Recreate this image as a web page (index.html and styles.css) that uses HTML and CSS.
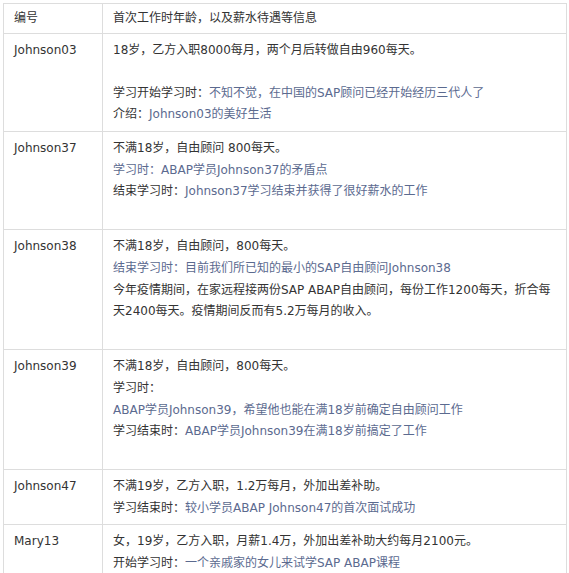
FILE: index.html
```html
<!DOCTYPE html>
<html lang="zh-CN">
<head>
    <meta charset="UTF-8">
    <meta name="viewport" content="width=device-width, initial-scale=1.0">
    <title>学员信息</title>
    <link rel="stylesheet" href="styles.css">
</head>
<body>
    <table class="info-table">
        <colgroup>
            <col class="col-id">
            <col class="col-info">
        </colgroup>
        <thead>
            <tr>
                <th>编号</th>
                <th>首次工作时年龄，以及薪水待遇等信息</th>
            </tr>
        </thead>
        <tbody>
            <tr>
                <td>Johnson03</td>
                <td>
                    <p>18岁，乙方入职8000每月，两个月后转做自由960每天。</p>
                    <p><br></p>
                    <p>学习开始学习时：<span class="note">不知不觉，在中国的SAP顾问已经开始经历三代人了</span></p>
                    <p>介绍：<span class="note">Johnson03的美好生活</span></p>
                </td>
            </tr>
            <tr>
                <td>Johnson37</td>
                <td>
                    <p>不满18岁，自由顾问 800每天。</p>
                    <p class="note">学习时：ABAP学员Johnson37的矛盾点</p>
                    <p>结束学习时：<span class="note">Johnson37学习结束并获得了很好薪水的工作</span></p>
                    <p><br></p>
                </td>
            </tr>
            <tr>
                <td>Johnson38</td>
                <td>
                    <p>不满18岁，自由顾问，800每天。</p>
                    <p class="note">结束学习时：目前我们所已知的最小的SAP自由顾问Johnson38</p>
                    <p>今年疫情期间，在家远程接两份SAP ABAP自由顾问，每份工作1200每天，折合每天2400每天。疫情期间反而有5.2万每月的收入。</p>
                    <p><br></p>
                </td>
            </tr>
            <tr>
                <td>Johnson39</td>
                <td>
                    <p>不满18岁，自由顾问，800每天。</p>
                    <p>学习时：</p>
                    <p class="note">ABAP学员Johnson39，希望他也能在满18岁前确定自由顾问工作</p>
                    <p>学习结束时：<span class="note">ABAP学员Johnson39在满18岁前搞定了工作</span></p>
                    <p><br></p>
                </td>
            </tr>
            <tr>
                <td>Johnson47</td>
                <td>
                    <p>不满19岁，乙方入职，1.2万每月，外加出差补助。</p>
                    <p>学习结束时：<span class="note">较小学员ABAP Johnson47的首次面试成功</span></p>
                </td>
            </tr>
            <tr>
                <td>Mary13</td>
                <td>
                    <p>女，19岁，乙方入职，月薪1.4万，外加出差补助大约每月2100元。</p>
                    <p>开始学习时：<span class="note">一个亲戚家的女儿来试学SAP ABAP课程</span></p>
                    <p><br></p>
                </td>
            </tr>
        </tbody>
    </table>
</body>
</html>
```

FILE: styles.css
```css
* {
    margin: 0;
    padding: 0;
    box-sizing: border-box;
}

body {
    margin: 3px 2px 0 3px;
    background: #fff;
    font-family: 'DejaVu Sans', 'Noto Sans CJK SC', sans-serif;
    font-size: 12px;
    line-height: 1.8;
    color: #333;
}

.info-table {
    width: 100%;
    border-collapse: collapse;
    table-layout: fixed;
}

.col-id {
    width: 99px;
}

.info-table th,
.info-table td {
    border: 1px solid #ddd;
    text-align: left;
    vertical-align: top;
    font-weight: normal;
}

.info-table th {
    padding: 4px 10px 3px;
}

.info-table td {
    padding: 6px 10px 5px;
}

.note {
    color: #5b6a8f;
}
```
